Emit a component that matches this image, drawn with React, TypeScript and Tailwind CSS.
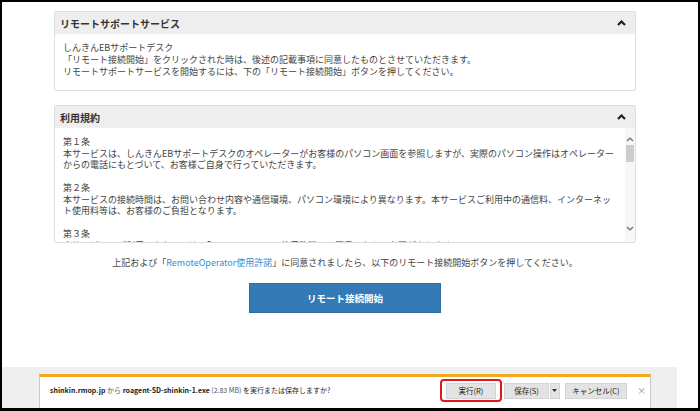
const jp = "font-['Noto_Sans_CJK_JP','Noto_Sans',sans-serif]";

function ChevronUp({ className = "" }: { className?: string }) {
  return (
    <svg width="9" height="6" viewBox="0 0 9 6" className={className}>
      <polyline points="1,5 4.5,1.5 8,5" fill="none" stroke="#222" strokeWidth="2.2" />
    </svg>
  );
}

function Panel({ title, children }: { title: string; children: React.ReactNode }) {
  return (
    <div className="border border-[#dedede] rounded-[2px]">
      <div className="h-[22px] bg-[#eeeeee] flex items-center justify-between pl-[5px] pr-[9px]">
        <span className="text-[10px] font-bold text-[#333]">{title}</span>
        <ChevronUp />
      </div>
      {children}
    </div>
  );
}

const terms = [
  "第１条",
  "本サービスは、しんきんEBサポートデスクのオペレーターがお客様のパソコン画面を参照しますが、実際のパソコン操作はオペレーター",
  "からの電話にもとづいて、お客様ご自身で行っていただきます。",
  "",
  "第２条",
  "本サービスの接続時間は、お問い合わせ内容や通信環境、パソコン環境により異なります。本サービスご利用中の通信料、インターネッ",
  "ト使用料等は、お客様のご負担となります。",
  "",
  "第３条",
  "本サービスのご利用にあたっては、「RemoteOperator使用許諾」に同意いただく必要があります。",
];

export default function App() {
  return (
    <div className={`w-[700px] h-[411px] border-2 border-b-[3px] border-black bg-white flex flex-col overflow-hidden ${jp}`}>
      <div className="flex-1 pt-[9px] pl-[52px] w-[636px]">
        <div className="w-[582px]">
          <Panel title="リモートサポートサービス">
            <div className="h-[56px] pt-[8px] pl-[8px] text-[9px] leading-[12px] text-[#444] whitespace-nowrap">
              <div>しんきんEBサポートデスク</div>
              <div>「リモート接続開始」をクリックされた時は、後述の記載事項に同意したものとさせていただきます。</div>
              <div>リモートサポートサービスを開始するには、下の「リモート接続開始」ボタンを押してください。</div>
            </div>
          </Panel>
          <div className="mt-[14px]">
            <Panel title="利用規約">
              <div className="h-[114px] flex overflow-hidden">
                <div className="flex-1 pt-[8px] pl-[8px] text-[9px] leading-[11.5px] text-[#444] whitespace-nowrap overflow-hidden">
                  {terms.map((t, i) => (
                    <div key={i} className="h-[11.5px]">{t}</div>
                  ))}
                </div>
                <div className="w-[10px] bg-[#f7f7f7] flex flex-col items-center">
                  <svg width="8" height="6" viewBox="0 0 8 6" className="mt-[8px]">
                    <polyline points="1,5 4,2 7,5" fill="none" stroke="#666" strokeWidth="1.2" />
                  </svg>
                  <div className="mt-[3px] w-[8px] h-[17px] bg-[#cdcdcd]" />
                  <div className="flex-1" />
                  <svg width="8" height="6" viewBox="0 0 8 6" className="mb-[10px]">
                    <polyline points="1,1 4,4 7,1" fill="none" stroke="#666" strokeWidth="1.2" />
                  </svg>
                </div>
              </div>
            </Panel>
          </div>
          <div className="mt-[14px] text-center text-[9px] leading-[12px] text-[#444] whitespace-nowrap">
            上記および「<span className="text-[#3b8ccb]">RemoteOperator使用許諾</span>」に同意されましたら、以下のリモート接続開始ボタンを押してください。
          </div>
          <div className="mt-[14px] flex justify-center">
            <div className="w-[192px] h-[30px] bg-[#337ab7] border border-[#2e6da4] flex items-center justify-center text-white text-[9.5px] font-bold">
              リモート接続開始
            </div>
          </div>
        </div>
      </div>
      <div className="h-[41px] flex">
        <div className="w-[675px] bg-[#efefef] pt-[7px] pl-[37px]">
          <div className="w-[612px] h-[34px] bg-white border-t-[3px] border-t-[#f0a81c] border-x border-x-[#c9c9c9]">
            <div className="h-[27px] flex items-center pl-[10px] pr-[4px] text-[7px] text-[#222] whitespace-nowrap">
              <span className="font-bold">shinkin.rmop.jp</span>
              <span className="text-[#555]">&nbsp;から&nbsp;</span>
              <span className="font-bold">roagent-SD-shinkin-1.exe</span>
              <span className="text-[#555]">&nbsp;(2.83 MB)&nbsp;</span>
              <span>を実行または保存しますか?</span>
              <div className="ml-auto flex items-center text-[7.5px]">
                <div className="border-2 border-[#e3161a] rounded-[4px] px-[4px] py-[1.5px]">
                  <div className="w-[50px] h-[16px] bg-[#e3e3e3] border border-[#d4d4d4] flex items-center justify-center">実行(R)</div>
                </div>
                <div className="ml-[2px] w-[45px] h-[16px] bg-[#e3e3e3] border border-[#d4d4d4] flex items-center justify-center">保存(S)</div>
                <div className="ml-[1px] w-[10px] h-[16px] bg-[#e3e3e3] border border-[#d4d4d4] flex items-center justify-center">
                  <svg width="5" height="3" viewBox="0 0 5 3"><polygon points="0,0 5,0 2.5,3" fill="#333" /></svg>
                </div>
                <div className="ml-[5px] w-[62px] h-[16px] bg-[#e3e3e3] border border-[#d4d4d4] flex items-center justify-center">キャンセル(C)</div>
                <span className="ml-[10px] text-[9px] text-[#888]">×</span>
              </div>
            </div>
          </div>
        </div>
      </div>
    </div>
  );
}
